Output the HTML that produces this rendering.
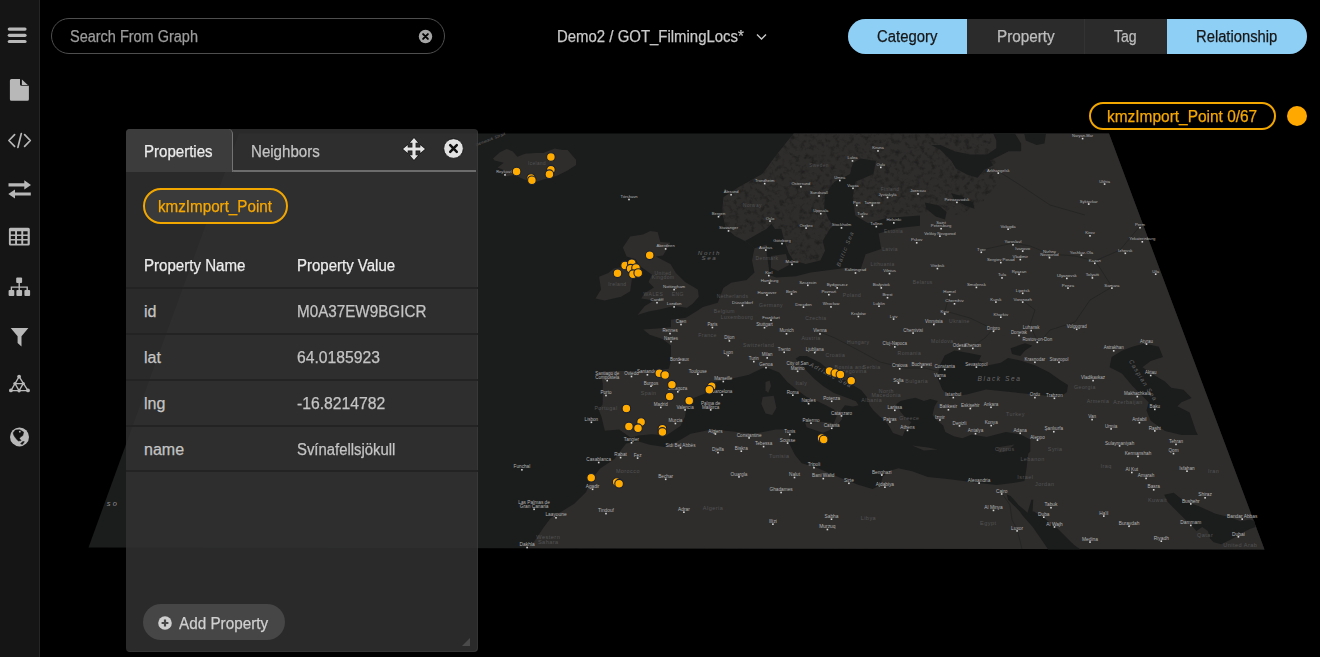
<!DOCTYPE html>
<html><head><meta charset="utf-8">
<style>
*{box-sizing:border-box;margin:0;padding:0}
html,body{width:1320px;height:657px;overflow:hidden;background:#000;font-family:"Liberation Sans",sans-serif}
.a{position:absolute;white-space:nowrap;line-height:16px;font-size:16px;-webkit-text-stroke:0.25px currentColor}
#side{position:absolute;left:0;top:0;width:40px;height:657px;background:#151515;border-right:1px solid #252525}
#map{position:absolute;left:0;top:0;width:1320px;height:657px}
#panel{position:absolute;left:126px;top:129.3px;width:351.6px;height:523px;background:rgba(50,50,50,0.84);border-radius:4px;overflow:hidden;box-shadow:inset -1px -1px 0 rgba(255,255,255,0.05)}
</style></head><body>
<svg id="map" width="1320" height="657" viewBox="0 0 1320 657">
<polygon points="239.0,133.6 1109.0,133.6 1264.5,549.5 88.5,547.5" fill="#1b1c1c"/>
<polygon points="793.6,133.6 1109.0,133.6 1264.5,549.5 527.0,548.2 534.2,541.5 543.6,527.4 550.7,518.0 562.5,510.9 574.3,503.8 586.1,492.0 590.8,480.2 600.2,468.4 614.4,459.0 621.4,449.5 626.2,443.6 630.9,437.7 619.1,429.5 604.9,430.7 603.7,426.0 601.4,416.5 598.5,409.3 602.6,404.7 602.8,396.5 602.8,383.7 600.7,373.1 611.3,371.0 632.6,371.0 653.9,371.0 668.8,368.8 671.0,360.3 671.0,345.4 662.4,339.0 649.7,334.7 643.3,329.4 660.3,328.3 671.0,327.3 671.0,319.8 685.9,317.7 696.5,311.3 702.9,307.0 717.8,302.8 723.3,287.9 731.1,282.7 746.6,280.1 754.5,272.6 752.0,260.4 754.5,248.2 745.0,241.0 735.0,236.0 725.9,228.3 722.0,212.8 723.3,197.3 738.8,186.9 762.1,174.0 777.6,153.3" fill="#2e2d2c"/>
<defs><filter id="tx" x="0" y="0" width="1" height="1"><feTurbulence type="fractalNoise" baseFrequency="0.2" numOctaves="3" seed="7" result="n"/><feColorMatrix in="n" type="matrix" values="0 0 0 0 0  0 0 0 0 0  0 0 0 0 0  2.6 0 0 0 -1.25" result="a"/><feComposite in="a" in2="SourceGraphic" operator="in"/></filter></defs>
<polygon points="793.6,133.6 777.6,153.3 762.1,174.0 738.8,186.9 723.3,197.3 722.0,212.8 725.9,228.3 735.0,236.0 766.7,228.7 783.7,238.5 793.5,260.4 820.3,260.4 833.0,226.0 825.0,194.6 850.0,174.0 876.0,161.0 873.0,174.0 855.0,182.0 852.7,197.3 855.3,215.4 886.0,218.0 925.0,212.0 960.0,215.0 985.0,200.0 1000.0,180.0 990.0,133.6" fill="#000" filter="url(#tx)" opacity="0.3"/>
<polygon points="745.0,241.0 749.6,238.5 766.7,228.7 771.5,223.8 775.0,229.0 781.3,228.7 783.7,238.5 788.6,253.0 793.5,260.4 805.7,264.0 820.3,260.4 825.1,250.6 822.7,240.9 830.0,228.7 833.0,226.0 828.0,218.0 824.2,208.0 825.0,194.6 834.6,181.8 850.1,174.0 852.7,163.6 860.5,158.5 876.0,161.1 873.4,174.0 855.3,181.8 852.7,197.3 855.3,215.4 868.2,223.2 886.3,218.0 920.0,215.4 920.0,225.8 896.7,228.3 878.6,233.5 881.2,249.0 865.6,254.2 860.5,269.7 847.0,267.7 830.0,270.1 810.5,272.6 795.9,276.2 776.4,277.4 769.1,275.0 769.1,270.1 766.7,253.1 766.7,244.6 754.5,248.2" fill="#1b1c1c"/>
<polygon points="630.9,437.7 638.0,435.4 652.1,434.2 666.3,435.4 680.4,426.0 685.1,416.5 685.9,409.3 692.3,398.6 705.6,393.2 712.0,382.6 722.6,380.5 733.2,378.3 748.2,375.1 765.5,366.9 779.2,372.4 787.4,382.0 795.6,388.8 806.6,397.1 817.5,401.2 825.8,405.3 834.0,409.4 836.7,416.2 834.0,423.1 831.2,427.2 836.7,425.8 842.2,419.0 840.8,410.8 844.9,405.3 853.2,406.6 858.6,405.3 855.9,401.2 844.9,397.1 834.0,393.0 823.0,386.1 814.8,379.2 806.6,371.0 801.1,364.2 795.6,358.7 799.7,356.0 806.6,356.0 814.8,360.1 820.3,362.8 828.5,369.7 839.5,376.5 850.4,383.4 861.4,390.2 866.8,397.1 869.6,405.3 873.7,410.8 880.3,417.0 885.6,421.2 889.9,427.6 893.0,433.0 902.6,436.2 904.8,430.8 908.0,427.6 911.2,422.3 904.8,417.0 900.5,411.7 896.2,404.2 900.5,401.0 909.0,398.9 915.4,397.8 924.0,401.0 930.4,398.9 937.8,401.0 934.6,406.3 932.5,414.9 936.8,420.2 943.2,425.5 945.3,431.9 953.8,436.2 962.3,438.3 971.8,434.5 986.4,436.9 1005.9,432.1 1020.5,434.5 1030.3,439.4 1030.3,451.5 1028.3,453.5 1026.4,469.2 1024.4,481.1 1012.6,483.0 996.8,485.0 979.1,483.0 963.3,481.1 947.6,479.1 927.9,477.1 912.1,471.2 898.3,468.3 888.5,471.2 882.6,477.1 880.6,485.0 872.7,488.9 858.9,485.0 843.2,479.1 829.4,473.2 815.6,467.3 801.8,463.3 795.0,455.0 788.6,442.2 790.8,433.7 784.4,429.5 775.8,429.5 754.5,433.7 733.2,431.6 712.0,429.5 690.6,433.7 680.0,440.1 666.3,447.2 649.7,444.8 638.0,441.3 626.2,443.6" fill="#1b1c1c"/>
<polygon points="954.5,350.6 944.7,355.5 939.9,365.3 937.4,377.4 942.3,389.6 949.6,396.9 966.7,394.5 986.2,389.6 1010.5,392.1 1034.9,394.5 1060.0,396.9 1067.0,392.0 1068.0,385.0 1060.0,379.9 1049.5,372.6 1034.9,365.3 1020.3,360.4 1008.1,358.0 1000.8,362.8 988.6,365.3 978.9,360.4 981.3,355.5 969.1,353.1" fill="#1b1c1c"/>
<polygon points="1010.5,348.2 1025.1,343.3 1032.4,345.8 1025.1,350.6 1020.3,356.0 1012.0,354.0" fill="#1b1c1c"/>
<polygon points="1132.2,346.7 1144.5,343.6 1158.9,346.7 1163.0,357.0 1150.7,361.1 1142.4,367.2 1154.8,375.5 1165.0,381.6 1171.2,387.8 1183.5,389.8 1191.7,398.1 1181.5,402.2 1177.4,406.3 1189.7,412.4 1195.9,430.9 1197.9,435.0 1181.5,435.0 1165.0,430.9 1150.7,420.7 1146.5,410.4 1148.6,402.2 1140.4,394.0 1132.2,385.7 1121.9,373.4 1109.6,367.2 1111.6,357.0 1121.9,350.8" fill="#1b1c1c"/>
<polygon points="1164.2,494.7 1173.7,492.8 1183.2,500.4 1198.4,506.1 1215.6,513.7 1230.8,517.5 1240.3,521.3 1249.8,519.4 1254.6,521.3 1255.5,527.0 1249.8,529.0 1242.2,532.8 1236.5,536.6 1228.9,540.4 1221.3,544.2 1213.7,542.3 1209.9,538.5 1207.9,530.9 1202.2,527.0 1196.5,530.9 1190.8,525.1 1179.4,513.7 1168.0,502.3" fill="#1b1c1c"/>
<polygon points="1006.8,494.6 1010.7,495.9 1018.5,504.9 1027.5,512.7 1031.4,499.8 1033.3,499.8 1032.5,511.4 1034.0,511.4 1045.6,519.2 1057.3,528.2 1065.0,536.0 1074.1,545.0 1080.6,549.6 1048.2,549.6 1041.7,539.9 1032.7,526.9 1022.3,515.3 1019.8,511.4 1008.1,499.8" fill="#1b1c1c"/>
<polygon points="993.2,133.6 1014.9,133.6 1021.1,143.5 1021.1,151.3 1008.7,151.3 996.3,157.5 990.0,160.6 993.2,165.3 983.9,169.9 977.6,177.7 966.8,174.6 955.9,168.4 951.2,160.6 940.4,149.7 931.1,145.1 940.4,145.1 954.3,151.3 969.9,154.4 987.0,154.4 996.3,148.2 996.3,140.4" fill="#1b1c1c"/>
<polygon points="1024.2,133.6 1046.0,133.6 1044.4,143.5 1036.6,145.1 1025.8,140.4" fill="#1b1c1c"/>
<polygon points="924.8,202.5 938.8,205.6 946.6,211.9 945.0,219.6 935.7,216.5 926.4,208.7" fill="#1b1c1c"/>
<polygon points="951.2,193.2 962.1,196.3 973.0,202.5 974.5,208.7 965.2,205.6 954.3,199.4" fill="#1b1c1c"/>
<polygon points="771.0,256.0 786.0,254.0 789.0,265.0 778.0,271.0 771.0,268.0" fill="#2e2d2c"/>
<polygon points="493.0,158.6 499.9,152.2 506.7,149.1 512.8,151.4 517.4,156.7 525.0,153.7 535.7,152.9 543.3,152.9 554.7,148.4 562.3,149.9 567.6,149.9 576.0,159.8 576.0,165.1 567.6,170.4 557.0,175.8 543.3,179.6 534.1,182.6 524.2,179.6 514.4,175.0 504.5,176.5 508.3,172.0 497.6,167.4 503.7,162.8 494.6,160.5" fill="#2e2d2c"/>
<polygon points="657.6,231.9 660.4,241.9 670.4,242.8 663.1,255.6 655.8,256.6 663.1,260.2 670.4,263.9 675.9,273.0 685.0,282.1 697.8,289.5 698.8,296.8 692.4,304.1 686.9,307.7 674.1,305.9 659.5,309.6 648.5,311.4 637.5,315.0 644.8,305.9 654.0,300.4 641.2,298.6 644.8,293.1 654.0,287.6 648.5,282.1 652.1,274.8 644.8,269.4 639.4,265.7 635.7,259.3 626.6,256.6 622.9,247.4 630.2,236.5 643.0,234.6 650.3,231.0" fill="#2e2d2c"/>
<polygon points="613.8,268.4 630.2,265.7 632.0,278.5 630.2,291.3 621.1,296.8 604.6,300.4 595.5,298.6 601.0,289.5 599.1,276.7 608.3,273.0" fill="#2e2d2c"/>
<polygon points="765.5,382.0 769.6,380.6 771.0,386.1 768.2,393.0 765.5,390.2" fill="#2e2d2c"/>
<polygon points="762.7,397.1 773.7,395.7 776.4,408.0 772.3,414.9 765.5,413.5 761.4,403.9" fill="#2e2d2c"/>
<polygon points="805.2,423.1 821.6,421.7 832.6,423.1 829.9,429.9 823.0,432.7 806.6,427.2" fill="#2e2d2c"/>
<polygon points="912.1,445.6 927.9,447.6 937.7,449.5 923.9,450.5" fill="#2e2d2c"/>
<polygon points="996.8,447.6 1014.5,444.6 1006.7,451.5 998.8,452.5" fill="#2e2d2c"/>
<polygon points="705.0,405.0 713.0,403.0 712.0,409.0 706.0,409.0" fill="#2e2d2c"/>
<g fill="none" stroke="#222322" stroke-width="0.75" stroke-linejoin="round"><polyline points="1040.0,342.0 1050.0,330.0 1075.0,322.0 1090.0,300.0 1112.0,287.0 1100.0,268.0 1095.0,261.0 1075.0,256.0 1050.0,254.0 1030.0,246.0 1013.0,243.0 995.0,247.0 981.0,250.0"/><polyline points="1037.0,340.0 1030.0,325.0 1035.0,310.0 1022.0,300.0"/><polyline points="973.0,346.0 985.0,338.0 993.0,329.0 970.0,318.0 945.0,311.0 950.0,292.0"/><polyline points="940.0,372.0 925.0,368.0 905.0,368.0 880.0,362.0 858.0,350.0 835.0,338.0 820.0,332.0"/><polyline points="1001.0,492.0 1010.0,505.0 1012.0,520.0 1017.0,529.0 1022.0,549.0"/><polyline points="1095.0,261.0 1120.0,250.0 1140.0,226.0"/><polyline points="998.0,171.0 1020.0,185.0 1050.0,205.0 1085.0,215.0"/></g>
<g font-family="Liberation Sans" text-anchor="middle"><text x="505.0" y="173.3" font-size="4.08" fill="#b4b4b4">Reykjavík</text><rect x="504.2" y="174.1" width="1.6" height="1.6" fill="#d8d8d8"/><text x="537.0" y="165.3" font-size="4.67" fill="#535353" letter-spacing="0.45">Iceland</text><text x="629.0" y="197.9" font-size="4.13" fill="#b4b4b4">Tórshavn</text><rect x="628.2" y="198.7" width="1.6" height="1.6" fill="#d8d8d8"/><text x="665.6" y="247.3" font-size="4.24" fill="#b4b4b4">Aberdeen</text><rect x="664.8" y="248.1" width="1.6" height="1.6" fill="#d8d8d8"/><text x="709.4" y="254.5" font-size="6.17" fill="#6a6a6a" font-style="italic" letter-spacing="1.6">North</text><text x="709.4" y="260.3" font-size="6.19" fill="#6a6a6a" font-style="italic" letter-spacing="1.6">Sea</text><text x="663.1" y="274.5" font-size="4.94" fill="#535353" letter-spacing="0.45">United</text><text x="663.1" y="278.9" font-size="4.96" fill="#535353" letter-spacing="0.45">Kingdom</text><text x="617.4" y="285.9" font-size="4.97" fill="#535353" letter-spacing="0.45">Ireland</text><text x="674.1" y="288.1" font-size="4.33" fill="#b4b4b4">Nottingham</text><rect x="673.3" y="288.8" width="1.6" height="1.6" fill="#d8d8d8"/><text x="653.4" y="295.8" font-size="5.00" fill="#535353" letter-spacing="0.45">WALES</text><text x="677.8" y="295.8" font-size="5.00" fill="#535353" letter-spacing="0.45">ENG</text><text x="657.0" y="301.2" font-size="4.36" fill="#b4b4b4">Cardiff</text><rect x="656.2" y="301.9" width="1.6" height="1.6" fill="#d8d8d8"/><text x="674.1" y="305.4" font-size="4.37" fill="#b4b4b4">London</text><rect x="673.3" y="306.1" width="1.6" height="1.6" fill="#d8d8d8"/><text x="681.0" y="323.0" font-size="4.41" fill="#b4b4b4">Caen</text><rect x="680.2" y="323.7" width="1.6" height="1.6" fill="#d8d8d8"/><text x="712.4" y="326.0" font-size="4.41" fill="#b4b4b4">Paris</text><rect x="711.6" y="326.7" width="1.6" height="1.6" fill="#d8d8d8"/><text x="670.0" y="332.1" font-size="4.43" fill="#b4b4b4">Rennes</text><rect x="669.2" y="332.8" width="1.6" height="1.6" fill="#d8d8d8"/><text x="707.5" y="336.6" font-size="5.10" fill="#535353" letter-spacing="0.45">France</text><text x="671.0" y="340.1" font-size="4.44" fill="#b4b4b4">Nantes</text><rect x="670.2" y="340.8" width="1.6" height="1.6" fill="#d8d8d8"/><text x="729.4" y="339.4" font-size="4.44" fill="#b4b4b4">Dijon</text><rect x="728.6" y="340.1" width="1.6" height="1.6" fill="#d8d8d8"/><text x="679.5" y="361.3" font-size="4.49" fill="#b4b4b4">Bordeaux</text><rect x="678.7" y="362.0" width="1.6" height="1.6" fill="#d8d8d8"/><text x="697.8" y="372.7" font-size="4.51" fill="#b4b4b4">Toulouse</text><rect x="697.0" y="373.4" width="1.6" height="1.6" fill="#d8d8d8"/><text x="728.2" y="354.0" font-size="4.47" fill="#b4b4b4">Lyon</text><rect x="727.4" y="354.7" width="1.6" height="1.6" fill="#d8d8d8"/><text x="723.3" y="380.0" font-size="4.53" fill="#b4b4b4">Marseille</text><rect x="722.5" y="380.7" width="1.6" height="1.6" fill="#d8d8d8"/><text x="718.5" y="215.1" font-size="4.17" fill="#b4b4b4">Bergen</text><rect x="717.7" y="215.9" width="1.6" height="1.6" fill="#d8d8d8"/><text x="728.5" y="229.3" font-size="4.20" fill="#b4b4b4">Stavanger</text><rect x="727.7" y="230.1" width="1.6" height="1.6" fill="#d8d8d8"/><text x="731.1" y="193.1" font-size="4.12" fill="#b4b4b4">Ålesund</text><rect x="730.3" y="193.9" width="1.6" height="1.6" fill="#d8d8d8"/><text x="764.7" y="182.0" font-size="4.10" fill="#b4b4b4">Trondheim</text><rect x="763.9" y="182.8" width="1.6" height="1.6" fill="#d8d8d8"/><text x="800.9" y="185.1" font-size="4.11" fill="#b4b4b4">Östersund</text><rect x="800.1" y="185.9" width="1.6" height="1.6" fill="#d8d8d8"/><text x="819.0" y="194.4" font-size="4.13" fill="#b4b4b4">Sundsvall</text><rect x="818.2" y="195.2" width="1.6" height="1.6" fill="#d8d8d8"/><text x="819.0" y="166.7" font-size="4.68" fill="#535353" letter-spacing="0.45">Sweden</text><text x="752.5" y="207.4" font-size="4.78" fill="#535353" letter-spacing="0.45">Norway</text><text x="770.0" y="219.5" font-size="4.18" fill="#b4b4b4">Oslo</text><rect x="769.2" y="220.3" width="1.6" height="1.6" fill="#d8d8d8"/><text x="820.8" y="212.1" font-size="4.17" fill="#b4b4b4">Uppsala</text><rect x="820.0" y="212.9" width="1.6" height="1.6" fill="#d8d8d8"/><text x="806.1" y="226.5" font-size="4.20" fill="#b4b4b4">Örebro</text><rect x="805.3" y="227.3" width="1.6" height="1.6" fill="#d8d8d8"/><text x="841.5" y="226.3" font-size="4.20" fill="#b4b4b4">Stockholm</text><rect x="840.7" y="227.1" width="1.6" height="1.6" fill="#d8d8d8"/><text x="782.0" y="242.0" font-size="4.23" fill="#b4b4b4">Göteborg</text><rect x="781.2" y="242.8" width="1.6" height="1.6" fill="#d8d8d8"/><text x="765.8" y="248.5" font-size="4.24" fill="#b4b4b4">Aarhus</text><rect x="765.0" y="249.3" width="1.6" height="1.6" fill="#d8d8d8"/><text x="767.0" y="260.4" font-size="4.91" fill="#535353" letter-spacing="0.45">Denmark</text><text x="792.0" y="262.8" font-size="4.28" fill="#b4b4b4">Malmö</text><rect x="791.2" y="263.6" width="1.6" height="1.6" fill="#d8d8d8"/><text x="768.8" y="274.0" font-size="4.30" fill="#b4b4b4">Kiel</text><rect x="768.0" y="274.8" width="1.6" height="1.6" fill="#d8d8d8"/><text x="769.5" y="281.6" font-size="4.32" fill="#b4b4b4">Hamburg</text><rect x="768.7" y="282.3" width="1.6" height="1.6" fill="#d8d8d8"/><text x="767.0" y="293.6" font-size="4.34" fill="#b4b4b4">Hannover</text><rect x="766.2" y="294.3" width="1.6" height="1.6" fill="#d8d8d8"/><text x="791.5" y="292.5" font-size="4.34" fill="#b4b4b4">Berlin</text><rect x="790.7" y="293.2" width="1.6" height="1.6" fill="#d8d8d8"/><text x="807.8" y="283.8" font-size="4.32" fill="#b4b4b4">Szczecin</text><rect x="807.0" y="284.5" width="1.6" height="1.6" fill="#d8d8d8"/><text x="837.2" y="286.4" font-size="4.33" fill="#b4b4b4">Bydgoszcz</text><rect x="836.4" y="287.1" width="1.6" height="1.6" fill="#d8d8d8"/><text x="855.5" y="271.4" font-size="4.29" fill="#b4b4b4">Kaliningrad</text><rect x="854.7" y="272.2" width="1.6" height="1.6" fill="#d8d8d8"/><text x="847.0" y="249.4" font-size="5.74" fill="#6a6a6a" font-style="italic" letter-spacing="1.2" transform="rotate(-68 847.0 249.4)">Baltic Sea</text><text x="732.6" y="298.4" font-size="5.00" fill="#535353" letter-spacing="0.45">Netherlands</text><text x="742.5" y="304.0" font-size="4.36" fill="#b4b4b4">Düsseldorf</text><rect x="741.7" y="304.7" width="1.6" height="1.6" fill="#d8d8d8"/><text x="771.0" y="306.5" font-size="5.02" fill="#535353" letter-spacing="0.45">Germany</text><text x="803.5" y="305.6" font-size="4.37" fill="#b4b4b4">Dresden</text><rect x="802.7" y="306.3" width="1.6" height="1.6" fill="#d8d8d8"/><text x="831.0" y="305.4" font-size="4.37" fill="#b4b4b4">Wrocław</text><rect x="830.2" y="306.1" width="1.6" height="1.6" fill="#d8d8d8"/><text x="828.8" y="293.2" font-size="4.34" fill="#b4b4b4">Poznań</text><rect x="828.0" y="293.9" width="1.6" height="1.6" fill="#d8d8d8"/><text x="852.0" y="296.8" font-size="5.00" fill="#535353" letter-spacing="0.45">Poland</text><text x="724.3" y="313.2" font-size="5.04" fill="#535353" letter-spacing="0.45">Belgium</text><text x="737.0" y="319.3" font-size="5.06" fill="#535353" letter-spacing="0.45">Luxembourg</text><text x="771.0" y="318.7" font-size="4.40" fill="#b4b4b4">Frankfurt</text><rect x="770.2" y="319.4" width="1.6" height="1.6" fill="#d8d8d8"/><text x="815.9" y="319.5" font-size="5.06" fill="#535353" letter-spacing="0.45">Czechia</text><text x="764.5" y="326.2" font-size="4.41" fill="#b4b4b4">Stuttgart</text><rect x="763.7" y="326.9" width="1.6" height="1.6" fill="#d8d8d8"/><text x="786.5" y="332.3" font-size="4.43" fill="#b4b4b4">Munich</text><rect x="785.7" y="333.0" width="1.6" height="1.6" fill="#d8d8d8"/><text x="820.0" y="332.4" font-size="4.43" fill="#b4b4b4">Vienna</text><rect x="819.2" y="333.1" width="1.6" height="1.6" fill="#d8d8d8"/><text x="858.4" y="315.0" font-size="4.39" fill="#b4b4b4">Kraków</text><rect x="857.6" y="315.7" width="1.6" height="1.6" fill="#d8d8d8"/><text x="852.5" y="159.3" font-size="4.05" fill="#b4b4b4">Luleå</text><rect x="851.7" y="160.1" width="1.6" height="1.6" fill="#d8d8d8"/><text x="880.8" y="165.8" font-size="4.07" fill="#b4b4b4">Oulu</text><rect x="880.0" y="166.6" width="1.6" height="1.6" fill="#d8d8d8"/><text x="878.0" y="149.3" font-size="4.03" fill="#b4b4b4">Kiruna</text><rect x="877.2" y="150.1" width="1.6" height="1.6" fill="#d8d8d8"/><text x="839.8" y="178.9" font-size="4.09" fill="#b4b4b4">Umeå</text><rect x="839.0" y="179.7" width="1.6" height="1.6" fill="#d8d8d8"/><text x="853.0" y="186.7" font-size="4.11" fill="#b4b4b4">Vaasa</text><rect x="852.2" y="187.5" width="1.6" height="1.6" fill="#d8d8d8"/><text x="890.0" y="191.4" font-size="4.74" fill="#535353" letter-spacing="0.45">Finland</text><text x="887.5" y="195.9" font-size="4.13" fill="#b4b4b4">Jyväskylä</text><rect x="886.7" y="196.7" width="1.6" height="1.6" fill="#d8d8d8"/><text x="856.8" y="203.8" font-size="4.15" fill="#b4b4b4">Pori</text><rect x="856.0" y="204.6" width="1.6" height="1.6" fill="#d8d8d8"/><text x="872.3" y="203.8" font-size="4.15" fill="#b4b4b4">Tampere</text><rect x="871.5" y="204.6" width="1.6" height="1.6" fill="#d8d8d8"/><text x="862.4" y="214.9" font-size="4.17" fill="#b4b4b4">Turku</text><rect x="861.6" y="215.7" width="1.6" height="1.6" fill="#d8d8d8"/><text x="893.8" y="221.3" font-size="4.19" fill="#b4b4b4">Helsinki</text><rect x="893.0" y="222.1" width="1.6" height="1.6" fill="#d8d8d8"/><text x="876.3" y="225.0" font-size="4.19" fill="#b4b4b4">Tallinn</text><rect x="875.5" y="225.8" width="1.6" height="1.6" fill="#d8d8d8"/><text x="893.6" y="233.3" font-size="4.84" fill="#535353" letter-spacing="0.45">Estonia</text><text x="918.0" y="192.3" font-size="4.12" fill="#b4b4b4">Joensuu</text><rect x="917.2" y="193.1" width="1.6" height="1.6" fill="#d8d8d8"/><text x="956.9" y="200.8" font-size="4.14" fill="#b4b4b4">Petrozavodsk</text><rect x="956.1" y="201.6" width="1.6" height="1.6" fill="#d8d8d8"/><text x="998.3" y="171.5" font-size="4.08" fill="#b4b4b4">Arkhangelsk</text><rect x="997.5" y="172.3" width="1.6" height="1.6" fill="#d8d8d8"/><text x="1082.6" y="136.9" font-size="4.00" fill="#b4b4b4">Naryan-Mar</text><rect x="1081.8" y="137.8" width="1.6" height="1.6" fill="#d8d8d8"/><text x="1104.6" y="182.5" font-size="4.10" fill="#b4b4b4">Ukhta</text><rect x="1103.8" y="183.3" width="1.6" height="1.6" fill="#d8d8d8"/><text x="1088.7" y="202.5" font-size="4.14" fill="#b4b4b4">Syktyvkar</text><rect x="1087.9" y="203.3" width="1.6" height="1.6" fill="#d8d8d8"/><text x="941.1" y="223.7" font-size="4.19" fill="#b4b4b4">Saint</text><text x="941.1" y="227.1" font-size="4.20" fill="#b4b4b4">Petersburg</text><rect x="940.3" y="227.9" width="1.6" height="1.6" fill="#d8d8d8"/><text x="939.9" y="234.6" font-size="4.21" fill="#b4b4b4">Velikiy Novgorod</text><rect x="939.1" y="235.4" width="1.6" height="1.6" fill="#d8d8d8"/><text x="916.7" y="241.2" font-size="4.23" fill="#b4b4b4">Pskov</text><rect x="915.9" y="242.0" width="1.6" height="1.6" fill="#d8d8d8"/><text x="890.0" y="250.9" font-size="4.89" fill="#535353" letter-spacing="0.45">Latvia</text><text x="882.6" y="266.2" font-size="4.92" fill="#535353" letter-spacing="0.45">Lithuania</text><text x="889.5" y="272.0" font-size="4.30" fill="#b4b4b4">Vilnius</text><rect x="888.7" y="272.8" width="1.6" height="1.6" fill="#d8d8d8"/><text x="922.8" y="283.9" font-size="4.97" fill="#535353" letter-spacing="0.45">Belarus</text><text x="937.4" y="267.0" font-size="4.28" fill="#b4b4b4">Vitebsk</text><rect x="936.6" y="267.8" width="1.6" height="1.6" fill="#d8d8d8"/><text x="881.3" y="286.4" font-size="4.33" fill="#b4b4b4">Białystok</text><rect x="880.5" y="287.1" width="1.6" height="1.6" fill="#d8d8d8"/><text x="976.4" y="285.9" font-size="4.33" fill="#b4b4b4">Smolensk</text><rect x="975.6" y="286.6" width="1.6" height="1.6" fill="#d8d8d8"/><text x="981.3" y="250.7" font-size="4.25" fill="#b4b4b4">Tver</text><rect x="980.5" y="251.5" width="1.6" height="1.6" fill="#d8d8d8"/><text x="1008.1" y="227.6" font-size="4.20" fill="#b4b4b4">Vologda</text><rect x="1007.3" y="228.4" width="1.6" height="1.6" fill="#d8d8d8"/><text x="1013.0" y="243.2" font-size="4.23" fill="#b4b4b4">Yaroslavl</text><rect x="1012.2" y="244.0" width="1.6" height="1.6" fill="#d8d8d8"/><text x="1022.7" y="249.5" font-size="4.25" fill="#b4b4b4">Ivanovo</text><rect x="1021.9" y="250.3" width="1.6" height="1.6" fill="#d8d8d8"/><text x="1020.3" y="258.0" font-size="4.27" fill="#b4b4b4">Vladimir</text><rect x="1019.5" y="258.8" width="1.6" height="1.6" fill="#d8d8d8"/><text x="1000.8" y="261.0" font-size="4.27" fill="#b4b4b4">Sergiev Posad</text><rect x="1000.0" y="261.8" width="1.6" height="1.6" fill="#d8d8d8"/><text x="1049.5" y="252.9" font-size="4.25" fill="#b4b4b4">Nizhny</text><text x="1049.5" y="256.1" font-size="4.26" fill="#b4b4b4">Novgorod</text><rect x="1048.7" y="256.9" width="1.6" height="1.6" fill="#d8d8d8"/><text x="1090.0" y="234.2" font-size="4.21" fill="#b4b4b4">Kirov</text><rect x="1089.2" y="235.0" width="1.6" height="1.6" fill="#d8d8d8"/><text x="1140.0" y="226.1" font-size="4.20" fill="#b4b4b4">Perm</text><rect x="1139.2" y="226.9" width="1.6" height="1.6" fill="#d8d8d8"/><text x="1142.3" y="240.2" font-size="4.23" fill="#b4b4b4">Yekaterinburg</text><rect x="1141.5" y="241.0" width="1.6" height="1.6" fill="#d8d8d8"/><text x="1125.3" y="251.7" font-size="4.25" fill="#b4b4b4">Izhevsk</text><rect x="1124.5" y="252.5" width="1.6" height="1.6" fill="#d8d8d8"/><text x="1081.4" y="253.6" font-size="4.26" fill="#b4b4b4">Yoshkar-Ola</text><rect x="1080.6" y="254.4" width="1.6" height="1.6" fill="#d8d8d8"/><text x="1094.8" y="261.7" font-size="4.27" fill="#b4b4b4">Kazan</text><rect x="1094.0" y="262.5" width="1.6" height="1.6" fill="#d8d8d8"/><text x="1155.7" y="272.6" font-size="4.30" fill="#b4b4b4">Ufa</text><rect x="1154.9" y="273.4" width="1.6" height="1.6" fill="#d8d8d8"/><text x="1066.8" y="276.9" font-size="4.31" fill="#b4b4b4">Ulyanovsk</text><rect x="1066.0" y="277.6" width="1.6" height="1.6" fill="#d8d8d8"/><text x="1092.4" y="276.3" font-size="4.30" fill="#b4b4b4">Tolyatti</text><rect x="1091.6" y="277.1" width="1.6" height="1.6" fill="#d8d8d8"/><text x="1111.9" y="286.6" font-size="4.33" fill="#b4b4b4">Samara</text><rect x="1111.1" y="287.3" width="1.6" height="1.6" fill="#d8d8d8"/><text x="1068.0" y="286.6" font-size="4.33" fill="#b4b4b4">Penza</text><rect x="1067.2" y="287.3" width="1.6" height="1.6" fill="#d8d8d8"/><text x="1002.0" y="276.3" font-size="4.30" fill="#b4b4b4">Tula</text><rect x="1001.2" y="277.1" width="1.6" height="1.6" fill="#d8d8d8"/><text x="1019.0" y="272.7" font-size="4.30" fill="#b4b4b4">Ryazan</text><rect x="1018.2" y="273.5" width="1.6" height="1.6" fill="#d8d8d8"/><text x="1022.7" y="291.8" font-size="4.34" fill="#b4b4b4">Lipetsk</text><rect x="1021.9" y="292.5" width="1.6" height="1.6" fill="#d8d8d8"/><text x="887.5" y="296.2" font-size="4.35" fill="#b4b4b4">Brest</text><rect x="886.7" y="296.9" width="1.6" height="1.6" fill="#d8d8d8"/><text x="879.0" y="304.7" font-size="4.37" fill="#b4b4b4">Lublin</text><rect x="878.2" y="305.4" width="1.6" height="1.6" fill="#d8d8d8"/><text x="949.6" y="293.3" font-size="4.34" fill="#b4b4b4">Homel</text><rect x="948.8" y="294.0" width="1.6" height="1.6" fill="#d8d8d8"/><text x="954.5" y="302.3" font-size="4.36" fill="#b4b4b4">Chernihiv</text><rect x="953.7" y="303.0" width="1.6" height="1.6" fill="#d8d8d8"/><text x="995.9" y="300.6" font-size="4.36" fill="#b4b4b4">Kursk</text><rect x="995.1" y="301.3" width="1.6" height="1.6" fill="#d8d8d8"/><text x="1022.7" y="300.6" font-size="4.36" fill="#b4b4b4">Voronezh</text><rect x="1021.9" y="301.3" width="1.6" height="1.6" fill="#d8d8d8"/><text x="944.7" y="312.5" font-size="4.38" fill="#b4b4b4">Kyiv</text><rect x="943.9" y="313.2" width="1.6" height="1.6" fill="#d8d8d8"/><text x="1000.8" y="315.7" font-size="4.39" fill="#b4b4b4">Kharkiv</text><rect x="1000.0" y="316.4" width="1.6" height="1.6" fill="#d8d8d8"/><text x="893.6" y="317.6" font-size="4.39" fill="#b4b4b4">Lviv</text><rect x="892.8" y="318.3" width="1.6" height="1.6" fill="#d8d8d8"/><text x="933.8" y="323.0" font-size="4.41" fill="#b4b4b4">Vinnytsia</text><rect x="933.0" y="323.7" width="1.6" height="1.6" fill="#d8d8d8"/><text x="959.4" y="323.4" font-size="5.07" fill="#535353" letter-spacing="0.45">Ukraine</text><text x="913.1" y="331.6" font-size="4.42" fill="#b4b4b4">Chernivtsi</text><rect x="912.3" y="332.3" width="1.6" height="1.6" fill="#d8d8d8"/><text x="993.5" y="329.8" font-size="4.42" fill="#b4b4b4">Dnipro</text><rect x="992.7" y="330.5" width="1.6" height="1.6" fill="#d8d8d8"/><text x="1031.2" y="329.1" font-size="4.42" fill="#b4b4b4">Luhansk</text><rect x="1030.4" y="329.8" width="1.6" height="1.6" fill="#d8d8d8"/><text x="1019.0" y="334.0" font-size="4.43" fill="#b4b4b4">Donetsk</text><rect x="1018.2" y="334.7" width="1.6" height="1.6" fill="#d8d8d8"/><text x="1076.7" y="327.8" font-size="4.42" fill="#b4b4b4">Volgograd</text><rect x="1075.9" y="328.5" width="1.6" height="1.6" fill="#d8d8d8"/><text x="1037.3" y="340.8" font-size="4.44" fill="#b4b4b4">Rostov-on-Don</text><rect x="1036.5" y="341.5" width="1.6" height="1.6" fill="#d8d8d8"/><text x="1146.5" y="342.6" font-size="4.45" fill="#b4b4b4">Atyrau</text><rect x="1145.7" y="343.3" width="1.6" height="1.6" fill="#d8d8d8"/><text x="1113.7" y="349.3" font-size="4.46" fill="#b4b4b4">Astrakhan</text><rect x="1112.9" y="350.0" width="1.6" height="1.6" fill="#d8d8d8"/><text x="858.3" y="344.0" font-size="5.12" fill="#535353" letter-spacing="0.45">Hungary</text><text x="894.8" y="345.4" font-size="4.45" fill="#b4b4b4">Cluj-Napoca</text><rect x="894.0" y="346.1" width="1.6" height="1.6" fill="#d8d8d8"/><text x="942.3" y="343.4" font-size="5.12" fill="#535353" letter-spacing="0.45">Moldova</text><text x="959.4" y="347.4" font-size="4.46" fill="#b4b4b4">Odesa</text><rect x="958.6" y="348.1" width="1.6" height="1.6" fill="#d8d8d8"/><text x="972.8" y="346.9" font-size="4.46" fill="#b4b4b4">Kherson</text><rect x="972.0" y="347.6" width="1.6" height="1.6" fill="#d8d8d8"/><text x="909.4" y="355.1" font-size="5.15" fill="#535353" letter-spacing="0.45">Romania</text><text x="976.4" y="365.6" font-size="4.50" fill="#b4b4b4">Sevastopol</text><rect x="975.6" y="366.3" width="1.6" height="1.6" fill="#d8d8d8"/><text x="1034.9" y="360.8" font-size="4.49" fill="#b4b4b4">Krasnodar</text><rect x="1034.1" y="361.5" width="1.6" height="1.6" fill="#d8d8d8"/><text x="1059.0" y="360.8" font-size="4.49" fill="#b4b4b4">Stavropol</text><rect x="1058.2" y="361.5" width="1.6" height="1.6" fill="#d8d8d8"/><text x="1150.7" y="374.0" font-size="4.52" fill="#b4b4b4">Aktau</text><rect x="1149.9" y="374.7" width="1.6" height="1.6" fill="#d8d8d8"/><text x="1093.1" y="379.1" font-size="4.53" fill="#b4b4b4">Vladikavkaz</text><rect x="1092.3" y="379.8" width="1.6" height="1.6" fill="#d8d8d8"/><text x="1084.9" y="388.8" font-size="5.23" fill="#535353" letter-spacing="0.45">Georgia</text><text x="1141.4" y="381.6" font-size="6.12" fill="#6a6a6a" font-style="italic" letter-spacing="1.2" transform="rotate(58 1141.4 381.6)">Caspian Sea</text><text x="999.6" y="380.5" font-size="6.57" fill="#6a6a6a" font-style="italic" letter-spacing="1.6">Black Sea</text><text x="811.0" y="339.8" font-size="5.11" fill="#535353" letter-spacing="0.45">Austria</text><text x="758.7" y="346.6" font-size="5.12" fill="#535353" letter-spacing="0.45">Switzerland</text><text x="784.2" y="350.8" font-size="4.47" fill="#b4b4b4">Trento</text><rect x="783.4" y="351.5" width="1.6" height="1.6" fill="#d8d8d8"/><text x="814.7" y="351.1" font-size="4.47" fill="#b4b4b4">Ljubljana</text><rect x="813.9" y="351.8" width="1.6" height="1.6" fill="#d8d8d8"/><text x="835.4" y="356.8" font-size="5.15" fill="#535353" letter-spacing="0.45">Croatia</text><text x="767.2" y="356.4" font-size="4.48" fill="#b4b4b4">Milan</text><rect x="766.4" y="357.1" width="1.6" height="1.6" fill="#d8d8d8"/><text x="753.8" y="360.1" font-size="4.49" fill="#b4b4b4">Turin</text><rect x="753.0" y="360.8" width="1.6" height="1.6" fill="#d8d8d8"/><text x="766.0" y="366.2" font-size="4.50" fill="#b4b4b4">Genoa</text><rect x="765.2" y="366.9" width="1.6" height="1.6" fill="#d8d8d8"/><text x="797.6" y="365.4" font-size="4.50" fill="#b4b4b4">City of San</text><text x="797.6" y="369.8" font-size="4.51" fill="#b4b4b4">Marino</text><rect x="796.8" y="370.5" width="1.6" height="1.6" fill="#d8d8d8"/><text x="849.7" y="368.5" font-size="5.18" fill="#535353" letter-spacing="0.45">Bosnia and</text><text x="849.7" y="372.5" font-size="5.19" fill="#535353" letter-spacing="0.45">Herzegovina</text><text x="871.7" y="369.2" font-size="5.18" fill="#535353" letter-spacing="0.45">Serbia</text><text x="921.6" y="365.6" font-size="4.50" fill="#b4b4b4">Bucharest</text><rect x="920.8" y="366.3" width="1.6" height="1.6" fill="#d8d8d8"/><text x="944.7" y="368.1" font-size="4.50" fill="#b4b4b4">Constanta</text><rect x="943.9" y="368.8" width="1.6" height="1.6" fill="#d8d8d8"/><text x="899.7" y="367.3" font-size="4.50" fill="#b4b4b4">Craiova</text><rect x="898.9" y="368.0" width="1.6" height="1.6" fill="#d8d8d8"/><text x="939.9" y="377.1" font-size="4.52" fill="#b4b4b4">Varna</text><rect x="939.1" y="377.8" width="1.6" height="1.6" fill="#d8d8d8"/><text x="898.5" y="381.5" font-size="4.53" fill="#b4b4b4">Sofia</text><rect x="897.7" y="382.2" width="1.6" height="1.6" fill="#d8d8d8"/><text x="916.7" y="382.6" font-size="5.21" fill="#535353" letter-spacing="0.45">Bulgaria</text><text x="886.3" y="392.9" font-size="5.24" fill="#535353" letter-spacing="0.45">North</text><text x="886.3" y="396.6" font-size="5.25" fill="#535353" letter-spacing="0.45">Macedonia</text><text x="871.7" y="402.0" font-size="5.26" fill="#535353" letter-spacing="0.45">Albania</text><text x="801.3" y="384.8" font-size="5.22" fill="#535353" letter-spacing="0.45">Italy</text><text x="830.0" y="377.0" font-size="6.11" fill="#6a6a6a" font-style="italic" letter-spacing="1.2" transform="rotate(28 830.0 377.0)">Adriatic Sea</text><text x="792.8" y="393.7" font-size="4.56" fill="#b4b4b4">Roma</text><rect x="792.0" y="394.4" width="1.6" height="1.6" fill="#d8d8d8"/><text x="808.6" y="402.2" font-size="4.58" fill="#b4b4b4">Naples</text><rect x="807.8" y="402.9" width="1.6" height="1.6" fill="#d8d8d8"/><text x="831.7" y="399.8" font-size="4.57" fill="#b4b4b4">Potenza</text><rect x="830.9" y="400.5" width="1.6" height="1.6" fill="#d8d8d8"/><text x="841.5" y="414.5" font-size="4.60" fill="#b4b4b4">Catanzaro</text><rect x="840.7" y="415.1" width="1.6" height="1.6" fill="#d8d8d8"/><text x="811.0" y="421.8" font-size="4.62" fill="#b4b4b4">Palermo</text><rect x="810.2" y="422.4" width="1.6" height="1.6" fill="#d8d8d8"/><text x="831.7" y="426.9" font-size="4.63" fill="#b4b4b4">Catania</text><rect x="830.9" y="427.5" width="1.6" height="1.6" fill="#d8d8d8"/><text x="894.8" y="408.9" font-size="4.59" fill="#b4b4b4">Larissa</text><rect x="894.0" y="409.5" width="1.6" height="1.6" fill="#d8d8d8"/><text x="889.9" y="420.6" font-size="4.62" fill="#b4b4b4">Patras</text><rect x="889.1" y="421.2" width="1.6" height="1.6" fill="#d8d8d8"/><text x="909.4" y="419.7" font-size="5.31" fill="#535353" letter-spacing="0.45">Greece</text><text x="907.5" y="429.0" font-size="4.63" fill="#b4b4b4">Athens</text><rect x="906.7" y="429.6" width="1.6" height="1.6" fill="#d8d8d8"/><text x="953.3" y="396.1" font-size="4.56" fill="#b4b4b4">Istanbul</text><rect x="952.5" y="396.8" width="1.6" height="1.6" fill="#d8d8d8"/><text x="948.4" y="408.4" font-size="4.59" fill="#b4b4b4">Balıkesir</text><rect x="947.6" y="409.0" width="1.6" height="1.6" fill="#d8d8d8"/><text x="970.3" y="407.2" font-size="4.59" fill="#b4b4b4">Eskişehir</text><rect x="969.5" y="407.8" width="1.6" height="1.6" fill="#d8d8d8"/><text x="991.0" y="405.9" font-size="4.58" fill="#b4b4b4">Ankara</text><rect x="990.2" y="406.5" width="1.6" height="1.6" fill="#d8d8d8"/><text x="1015.4" y="415.6" font-size="5.30" fill="#535353" letter-spacing="0.45">Turkey</text><text x="1034.9" y="396.1" font-size="4.56" fill="#b4b4b4">Ordu</text><rect x="1034.1" y="396.8" width="1.6" height="1.6" fill="#d8d8d8"/><text x="1054.4" y="396.8" font-size="4.57" fill="#b4b4b4">Trabzon</text><rect x="1053.6" y="397.5" width="1.6" height="1.6" fill="#d8d8d8"/><text x="1137.3" y="395.1" font-size="4.56" fill="#b4b4b4">Makhachkala</text><rect x="1136.5" y="395.8" width="1.6" height="1.6" fill="#d8d8d8"/><text x="1098.0" y="402.6" font-size="5.26" fill="#535353" letter-spacing="0.45">Armenia</text><text x="1128.0" y="404.1" font-size="5.27" fill="#535353" letter-spacing="0.45">Azerbaijan</text><text x="1154.8" y="408.0" font-size="4.59" fill="#b4b4b4">Baku</text><rect x="1154.0" y="408.6" width="1.6" height="1.6" fill="#d8d8d8"/><text x="1092.1" y="418.2" font-size="4.61" fill="#b4b4b4">Van</text><rect x="1091.3" y="418.8" width="1.6" height="1.6" fill="#d8d8d8"/><text x="1139.4" y="421.3" font-size="4.62" fill="#b4b4b4">Ardabil</text><rect x="1138.6" y="421.9" width="1.6" height="1.6" fill="#d8d8d8"/><text x="1111.1" y="427.5" font-size="4.63" fill="#b4b4b4">Urmia</text><rect x="1110.3" y="428.1" width="1.6" height="1.6" fill="#d8d8d8"/><text x="1154.8" y="429.5" font-size="4.64" fill="#b4b4b4">Rasht</text><rect x="1154.0" y="430.1" width="1.6" height="1.6" fill="#d8d8d8"/><text x="939.9" y="418.6" font-size="4.61" fill="#b4b4b4">Izmir</text><rect x="939.1" y="419.2" width="1.6" height="1.6" fill="#d8d8d8"/><text x="959.5" y="424.5" font-size="4.62" fill="#b4b4b4">Denizli</text><rect x="958.7" y="425.1" width="1.6" height="1.6" fill="#d8d8d8"/><text x="991.2" y="424.2" font-size="4.62" fill="#b4b4b4">Konya</text><rect x="990.4" y="424.8" width="1.6" height="1.6" fill="#d8d8d8"/><text x="975.5" y="432.3" font-size="4.64" fill="#b4b4b4">Antalya</text><rect x="974.7" y="432.9" width="1.6" height="1.6" fill="#d8d8d8"/><text x="1020.2" y="431.9" font-size="4.64" fill="#b4b4b4">Adana</text><rect x="1019.4" y="432.5" width="1.6" height="1.6" fill="#d8d8d8"/><text x="1053.8" y="430.3" font-size="4.64" fill="#b4b4b4">Şanlıurfa</text><rect x="1053.0" y="430.9" width="1.6" height="1.6" fill="#d8d8d8"/><text x="1037.5" y="438.7" font-size="4.66" fill="#b4b4b4">Aleppo</text><rect x="1036.7" y="439.3" width="1.6" height="1.6" fill="#d8d8d8"/><text x="1176.0" y="443.0" font-size="4.66" fill="#b4b4b4">Tehran</text><rect x="1175.2" y="443.6" width="1.6" height="1.6" fill="#d8d8d8"/><text x="1173.5" y="452.2" font-size="4.68" fill="#b4b4b4">Qom</text><rect x="1172.7" y="452.8" width="1.6" height="1.6" fill="#d8d8d8"/><text x="1119.6" y="444.5" font-size="4.67" fill="#b4b4b4">Sulaymaniyah</text><rect x="1118.8" y="445.1" width="1.6" height="1.6" fill="#d8d8d8"/><text x="1138.0" y="455.0" font-size="4.69" fill="#b4b4b4">Kermanshah</text><rect x="1137.2" y="455.6" width="1.6" height="1.6" fill="#d8d8d8"/><text x="1004.8" y="451.3" font-size="5.38" fill="#535353" letter-spacing="0.45">Cyprus</text><text x="1055.1" y="451.3" font-size="5.38" fill="#535353" letter-spacing="0.45">Syria</text><text x="1032.5" y="460.5" font-size="5.41" fill="#535353" letter-spacing="0.45">Lebanon</text><text x="1106.2" y="468.3" font-size="5.43" fill="#535353" letter-spacing="0.45">Iraq</text><text x="1025.3" y="478.6" font-size="5.45" fill="#535353" letter-spacing="0.45">Israel</text><text x="1044.8" y="486.2" font-size="5.47" fill="#535353" letter-spacing="0.45">Jordan</text><text x="1131.8" y="471.1" font-size="4.73" fill="#b4b4b4">Al Kut</text><rect x="1131.0" y="471.7" width="1.6" height="1.6" fill="#d8d8d8"/><text x="1187.0" y="469.8" font-size="4.72" fill="#b4b4b4">Isfahan</text><rect x="1186.2" y="470.4" width="1.6" height="1.6" fill="#d8d8d8"/><text x="1213.7" y="472.6" font-size="5.44" fill="#535353" letter-spacing="0.45">Iran</text><text x="1146.1" y="477.0" font-size="4.74" fill="#b4b4b4">Amarah</text><rect x="1145.3" y="477.6" width="1.6" height="1.6" fill="#d8d8d8"/><text x="1153.7" y="488.4" font-size="4.76" fill="#b4b4b4">Basra</text><rect x="1152.9" y="489.0" width="1.6" height="1.6" fill="#d8d8d8"/><text x="1157.5" y="501.7" font-size="5.51" fill="#535353" letter-spacing="0.45">Kuwait</text><text x="1205.1" y="496.4" font-size="4.78" fill="#b4b4b4">Shiraz</text><rect x="1204.3" y="497.0" width="1.6" height="1.6" fill="#d8d8d8"/><text x="1190.8" y="502.5" font-size="4.79" fill="#b4b4b4">Bushehr</text><rect x="1190.0" y="503.1" width="1.6" height="1.6" fill="#d8d8d8"/><text x="607.2" y="375.0" font-size="4.52" fill="#b4b4b4">Santiago de</text><text x="607.2" y="379.1" font-size="4.53" fill="#b4b4b4">Compostela</text><rect x="606.4" y="379.8" width="1.6" height="1.6" fill="#d8d8d8"/><text x="631.5" y="375.0" font-size="4.52" fill="#b4b4b4">Oviedo</text><rect x="630.7" y="375.7" width="1.6" height="1.6" fill="#d8d8d8"/><text x="647.4" y="373.3" font-size="4.51" fill="#b4b4b4">Santander</text><rect x="646.6" y="374.0" width="1.6" height="1.6" fill="#d8d8d8"/><text x="651.0" y="384.7" font-size="4.54" fill="#b4b4b4">Burgos</text><rect x="650.2" y="385.4" width="1.6" height="1.6" fill="#d8d8d8"/><text x="677.8" y="390.3" font-size="4.55" fill="#b4b4b4">Zaragoza</text><rect x="677.0" y="391.0" width="1.6" height="1.6" fill="#d8d8d8"/><text x="606.0" y="394.0" font-size="4.56" fill="#b4b4b4">Porto</text><rect x="605.2" y="394.7" width="1.6" height="1.6" fill="#d8d8d8"/><text x="648.6" y="395.0" font-size="5.24" fill="#535353" letter-spacing="0.45">Spain</text><text x="660.8" y="406.0" font-size="4.58" fill="#b4b4b4">Madrid</text><rect x="660.0" y="406.6" width="1.6" height="1.6" fill="#d8d8d8"/><text x="685.1" y="408.5" font-size="4.59" fill="#b4b4b4">Valencia</text><rect x="684.3" y="409.1" width="1.6" height="1.6" fill="#d8d8d8"/><text x="722.1" y="393.4" font-size="4.56" fill="#b4b4b4">Barcelona</text><rect x="721.3" y="394.1" width="1.6" height="1.6" fill="#d8d8d8"/><text x="710.7" y="404.7" font-size="4.58" fill="#b4b4b4">Palma de</text><text x="710.7" y="408.5" font-size="4.59" fill="#b4b4b4">Mallorca</text><rect x="709.9" y="409.1" width="1.6" height="1.6" fill="#d8d8d8"/><text x="606.0" y="410.3" font-size="5.28" fill="#535353" letter-spacing="0.45">Portugal</text><text x="591.4" y="420.9" font-size="4.62" fill="#b4b4b4">Lisbon</text><rect x="590.6" y="421.5" width="1.6" height="1.6" fill="#d8d8d8"/><text x="675.4" y="422.1" font-size="4.62" fill="#b4b4b4">Murcia</text><rect x="674.6" y="422.7" width="1.6" height="1.6" fill="#d8d8d8"/><text x="631.5" y="441.4" font-size="4.66" fill="#b4b4b4">Tangier</text><rect x="630.7" y="442.0" width="1.6" height="1.6" fill="#d8d8d8"/><text x="715.4" y="432.6" font-size="4.64" fill="#b4b4b4">Algiers</text><rect x="714.6" y="433.2" width="1.6" height="1.6" fill="#d8d8d8"/><text x="749.1" y="436.5" font-size="4.65" fill="#b4b4b4">Constantine</text><rect x="748.3" y="437.1" width="1.6" height="1.6" fill="#d8d8d8"/><text x="789.8" y="433.1" font-size="4.64" fill="#b4b4b4">Tunis</text><rect x="789.0" y="433.7" width="1.6" height="1.6" fill="#d8d8d8"/><text x="787.6" y="441.7" font-size="4.66" fill="#b4b4b4">Sousse</text><rect x="786.8" y="442.3" width="1.6" height="1.6" fill="#d8d8d8"/><text x="763.6" y="445.2" font-size="4.67" fill="#b4b4b4">Tebessa</text><rect x="762.8" y="445.8" width="1.6" height="1.6" fill="#d8d8d8"/><text x="680.5" y="446.5" font-size="4.67" fill="#b4b4b4">Sidi Bel Abbès</text><rect x="679.7" y="447.1" width="1.6" height="1.6" fill="#d8d8d8"/><text x="718.0" y="451.2" font-size="4.68" fill="#b4b4b4">Djelfa</text><rect x="717.2" y="451.8" width="1.6" height="1.6" fill="#d8d8d8"/><text x="741.3" y="449.8" font-size="4.68" fill="#b4b4b4">Biskra</text><rect x="740.5" y="450.4" width="1.6" height="1.6" fill="#d8d8d8"/><text x="779.2" y="458.0" font-size="5.40" fill="#535353" letter-spacing="0.45">Tunisia</text><text x="620.6" y="456.2" font-size="4.69" fill="#b4b4b4">Rabat</text><rect x="619.8" y="456.8" width="1.6" height="1.6" fill="#d8d8d8"/><text x="637.6" y="456.7" font-size="4.69" fill="#b4b4b4">Fez</text><rect x="636.8" y="457.3" width="1.6" height="1.6" fill="#d8d8d8"/><text x="598.7" y="461.1" font-size="4.70" fill="#b4b4b4">Casablanca</text><rect x="597.9" y="461.7" width="1.6" height="1.6" fill="#d8d8d8"/><text x="521.9" y="468.4" font-size="4.72" fill="#b4b4b4">Funchal</text><rect x="521.1" y="469.0" width="1.6" height="1.6" fill="#d8d8d8"/><text x="627.9" y="473.4" font-size="5.44" fill="#535353" letter-spacing="0.45">Morocco</text><text x="665.7" y="477.9" font-size="4.74" fill="#b4b4b4">Bechar</text><rect x="664.9" y="478.5" width="1.6" height="1.6" fill="#d8d8d8"/><text x="592.6" y="487.9" font-size="4.76" fill="#b4b4b4">Agadir</text><rect x="591.8" y="488.5" width="1.6" height="1.6" fill="#d8d8d8"/><text x="814.0" y="466.3" font-size="4.72" fill="#b4b4b4">Tripoli</text><rect x="813.2" y="466.9" width="1.6" height="1.6" fill="#d8d8d8"/><text x="739.0" y="475.5" font-size="4.74" fill="#b4b4b4">Ouargla</text><rect x="738.2" y="476.1" width="1.6" height="1.6" fill="#d8d8d8"/><text x="794.5" y="476.1" font-size="4.74" fill="#b4b4b4">Nalut</text><rect x="793.7" y="476.7" width="1.6" height="1.6" fill="#d8d8d8"/><text x="823.3" y="477.2" font-size="4.74" fill="#b4b4b4">Bani Walid</text><rect x="822.5" y="477.8" width="1.6" height="1.6" fill="#d8d8d8"/><text x="848.9" y="481.9" font-size="4.75" fill="#b4b4b4">Sirte</text><rect x="848.1" y="482.5" width="1.6" height="1.6" fill="#d8d8d8"/><text x="881.8" y="473.7" font-size="4.73" fill="#b4b4b4">Benghazi</text><rect x="881.0" y="474.3" width="1.6" height="1.6" fill="#d8d8d8"/><text x="884.9" y="485.8" font-size="4.76" fill="#b4b4b4">Ajdabiya</text><rect x="884.1" y="486.4" width="1.6" height="1.6" fill="#d8d8d8"/><text x="781.1" y="491.1" font-size="4.77" fill="#b4b4b4">Ghadames</text><rect x="780.3" y="491.7" width="1.6" height="1.6" fill="#d8d8d8"/><text x="534.1" y="503.5" font-size="4.80" fill="#b4b4b4">Las Palmas de</text><text x="534.1" y="507.9" font-size="4.81" fill="#b4b4b4">Gran Canaria</text><rect x="533.3" y="508.5" width="1.6" height="1.6" fill="#d8d8d8"/><text x="606.0" y="512.2" font-size="4.81" fill="#b4b4b4">Tindouf</text><rect x="605.2" y="512.8" width="1.6" height="1.6" fill="#d8d8d8"/><text x="683.9" y="510.8" font-size="4.81" fill="#b4b4b4">Adrar</text><rect x="683.1" y="511.4" width="1.6" height="1.6" fill="#d8d8d8"/><text x="713.0" y="510.1" font-size="5.53" fill="#535353" letter-spacing="0.45">Algeria</text><text x="556.0" y="516.4" font-size="4.82" fill="#b4b4b4">Laayoune</text><rect x="555.2" y="517.0" width="1.6" height="1.6" fill="#d8d8d8"/><text x="831.5" y="517.8" font-size="4.83" fill="#b4b4b4">Sabha</text><rect x="830.7" y="518.4" width="1.6" height="1.6" fill="#d8d8d8"/><text x="868.4" y="520.4" font-size="5.56" fill="#535353" letter-spacing="0.45">Libya</text><text x="772.9" y="522.8" font-size="4.84" fill="#b4b4b4">Illizi</text><rect x="772.1" y="523.4" width="1.6" height="1.6" fill="#d8d8d8"/><text x="827.4" y="528.1" font-size="4.85" fill="#b4b4b4">Murzuq</text><rect x="826.6" y="528.7" width="1.6" height="1.6" fill="#d8d8d8"/><text x="548.3" y="538.6" font-size="5.60" fill="#535353" letter-spacing="0.45">Western</text><text x="548.3" y="544.2" font-size="5.62" fill="#535353" letter-spacing="0.45">Sahara</text><text x="527.1" y="546.2" font-size="4.89" fill="#b4b4b4">Dakhla</text><rect x="526.3" y="546.7" width="1.6" height="1.6" fill="#d8d8d8"/><text x="979.1" y="481.7" font-size="4.75" fill="#b4b4b4">Alexandria</text><rect x="978.3" y="482.3" width="1.6" height="1.6" fill="#d8d8d8"/><text x="1001.7" y="492.6" font-size="4.77" fill="#b4b4b4">Cairo</text><rect x="1000.9" y="493.2" width="1.6" height="1.6" fill="#d8d8d8"/><text x="1051.0" y="506.3" font-size="4.80" fill="#b4b4b4">Tabuk</text><rect x="1050.2" y="506.9" width="1.6" height="1.6" fill="#d8d8d8"/><text x="993.5" y="509.0" font-size="4.81" fill="#b4b4b4">Al Minya</text><rect x="992.7" y="509.6" width="1.6" height="1.6" fill="#d8d8d8"/><text x="1043.8" y="515.8" font-size="4.82" fill="#b4b4b4">Duba</text><rect x="1043.0" y="516.4" width="1.6" height="1.6" fill="#d8d8d8"/><text x="1103.8" y="514.7" font-size="4.82" fill="#b4b4b4">Ha'il</text><rect x="1103.0" y="515.3" width="1.6" height="1.6" fill="#d8d8d8"/><text x="988.3" y="524.9" font-size="5.57" fill="#535353" letter-spacing="0.45">Egypt</text><text x="1054.5" y="525.6" font-size="4.84" fill="#b4b4b4">Al Wajh</text><rect x="1053.7" y="526.2" width="1.6" height="1.6" fill="#d8d8d8"/><text x="1017.1" y="529.5" font-size="4.85" fill="#b4b4b4">Luxor</text><rect x="1016.3" y="530.1" width="1.6" height="1.6" fill="#d8d8d8"/><text x="1090.0" y="540.8" font-size="4.88" fill="#b4b4b4">Medina</text><rect x="1089.2" y="541.3" width="1.6" height="1.6" fill="#d8d8d8"/><text x="1129.0" y="524.9" font-size="4.84" fill="#b4b4b4">Buraydah</text><rect x="1128.2" y="525.5" width="1.6" height="1.6" fill="#d8d8d8"/><text x="1190.8" y="524.0" font-size="4.84" fill="#b4b4b4">Dammam</text><rect x="1190.0" y="524.6" width="1.6" height="1.6" fill="#d8d8d8"/><text x="1205.1" y="536.5" font-size="5.60" fill="#535353" letter-spacing="0.45">Qatar</text><text x="1238.4" y="535.5" font-size="4.86" fill="#b4b4b4">Dubai</text><rect x="1237.6" y="536.0" width="1.6" height="1.6" fill="#d8d8d8"/><text x="1242.2" y="517.7" font-size="4.83" fill="#b4b4b4">Bandar Abbas</text><rect x="1241.4" y="518.3" width="1.6" height="1.6" fill="#d8d8d8"/><text x="1161.3" y="539.9" font-size="4.87" fill="#b4b4b4">Riyadh</text><rect x="1160.5" y="540.4" width="1.6" height="1.6" fill="#d8d8d8"/><text x="1240.3" y="547.3" font-size="5.62" fill="#535353" letter-spacing="0.45">United Arab</text><text x="490.6" y="140.6" font-size="4" fill="#7a7a7a" font-style="italic" letter-spacing="0.35" transform="rotate(-21 490.6 139.2)">Denmark Strait</text><text x="113" y="505.6" font-size="7.5" fill="#8c8c8c" font-style="italic" letter-spacing="2.2">so</text></g>
<g fill="#ffab00" stroke="#1b2130" stroke-width="1.1"><circle cx="550.9" cy="157.1" r="4.3"/><circle cx="516.6" cy="171.6" r="4.3"/><circle cx="531.1" cy="178.0" r="4.3"/><circle cx="531.9" cy="180.3" r="4.3"/><circle cx="550.9" cy="169.7" r="4.3"/><circle cx="549.4" cy="174.2" r="4.3"/><circle cx="649.7" cy="255.3" r="4.3"/><circle cx="617.5" cy="273.3" r="4.3"/><circle cx="625.1" cy="265.4" r="4.3"/><circle cx="631.8" cy="263.3" r="4.3"/><circle cx="630.6" cy="268.7" r="4.3"/><circle cx="636.0" cy="268.1" r="4.3"/><circle cx="633.0" cy="274.2" r="4.3"/><circle cx="638.2" cy="273.0" r="4.3"/><circle cx="659.3" cy="373.2" r="4.3"/><circle cx="665.1" cy="374.9" r="4.3"/><circle cx="671.9" cy="384.7" r="4.3"/><circle cx="669.7" cy="396.5" r="4.3"/><circle cx="689.2" cy="400.8" r="4.3"/><circle cx="711.7" cy="386.2" r="4.3"/><circle cx="709.3" cy="389.8" r="4.3"/><circle cx="626.4" cy="408.5" r="4.3"/><circle cx="641.1" cy="422.1" r="4.3"/><circle cx="628.9" cy="426.4" r="4.3"/><circle cx="638.0" cy="428.2" r="4.3"/><circle cx="662.4" cy="428.8" r="4.3"/><circle cx="662.4" cy="431.9" r="4.3"/><circle cx="591.2" cy="477.8" r="4.3"/><circle cx="616.7" cy="482.1" r="4.3"/><circle cx="619.1" cy="483.7" r="4.3"/><circle cx="829.5" cy="370.9" r="4.3"/><circle cx="835.3" cy="373.1" r="4.3"/><circle cx="840.4" cy="374.5" r="4.3"/><circle cx="851.2" cy="380.7" r="4.3"/><circle cx="821.6" cy="438.1" r="4.3"/><circle cx="823.7" cy="439.6" r="4.3"/></g>
</svg>

<div id="side">
<svg width="40" height="460" viewBox="0 0 40 460" style="position:absolute;left:0;top:0" fill="#b8b8b8">
 <rect x="7.7" y="27.5" width="18.9" height="3.2" rx="1.6"/><rect x="7.7" y="33.7" width="18.9" height="3.2" rx="1.6"/><rect x="7.7" y="39.9" width="18.9" height="3.2" rx="1.6"/>
 <path d="M9.9 80.5a1.5 1.5 0 0 1 1.5-1.5h8.6v5.2a1.5 1.5 0 0 0 1.5 1.5h7.4v13.5a1.5 1.5 0 0 1-1.5 1.5H11.4a1.5 1.5 0 0 1-1.5-1.5z"/>
 <path d="M21.9 79.6L27.8 85.1H21.9z"/>
 <g stroke="#b8b8b8" stroke-width="1.7" fill="none" stroke-linecap="round" stroke-linejoin="round"><path d="M14.6 134.6L8.9 140.5L14.6 146.4M24.6 134.6L30.3 140.5L24.6 146.4M21.3 133.6L17.9 147.4"/></g>
 <path d="M8.5 183.3h15.8v-3l6.7 4.6-6.7 4.6v-3H8.5z M30.8 192.4H15v-3l-6.7 4.6 6.7 4.6v-3h15.8z"/>
 <path fill-rule="evenodd" d="M10.4 227.7h17.9a1.5 1.5 0 0 1 1.5 1.5v14.7a1.5 1.5 0 0 1-1.5 1.5H10.4a1.5 1.5 0 0 1-1.5-1.5V229.2a1.5 1.5 0 0 1 1.5-1.5z M10.8 231.2v3.2h4.3v-3.2z M17 231.2v3.2h4.3v-3.2z M23.2 231.2v3.2h4.4v-3.2z M10.8 235.9v3.1h4.3v-3.1z M17 235.9v3.1h4.3v-3.1z M23.2 235.9v3.1h4.4v-3.1z M10.8 240.6v3.1h4.3v-3.1z M17 240.6v3.1h4.3v-3.1z M23.2 240.6v3.1h4.4v-3.1z"/>
 <rect x="16.2" y="277.5" width="5.9" height="5.5" rx="1"/><rect x="8.6" y="290.1" width="5.7" height="5.9" rx="1"/><rect x="16.4" y="290.1" width="5.7" height="5.9" rx="1"/><rect x="24.4" y="290.1" width="5.7" height="5.9" rx="1"/>
 <path d="M19.2 282.5v8M11.4 290.5v-3.4h15.8v3.4" stroke="#b8b8b8" stroke-width="1.4" fill="none"/>
 <path d="M10.7 328h17.7l-6.9 8.3v10.1l-3.9-3.3v-6.8z"/>
 <g stroke="#b8b8b8" stroke-width="1.3" fill="none"><path d="M19.1 376.6L10.9 390.6H28z M15 383.6H23.2L19.1 390.6z"/></g>
 <circle cx="19.1" cy="376.6" r="1.9"/><circle cx="10.9" cy="390.4" r="1.9"/><circle cx="28" cy="390.4" r="1.9"/><circle cx="15" cy="383.6" r="1.7"/><circle cx="23.2" cy="383.6" r="1.7"/><circle cx="19.1" cy="390.8" r="1.7"/>
 <circle cx="19.5" cy="436.9" r="9.5"/>
 <path d="M13.1 432.9L15.3 430.1L19.6 429.7L23.6 432.1L22.8 435.6L20.4 437.1L19.4 438.6L21.1 440.6L18.4 440.9L16 438.6L14 435.6z M20.6 443.6L22.9 441.6L24.3 441.7L22.3 444.4z" fill="#121212" stroke="#121212" stroke-width="0.6" stroke-linejoin="round"/>
 <circle cx="19.8" cy="431.7" r="0.9" fill="#b8b8b8"/>
</svg>
</div>

<!-- search -->
<div style="position:absolute;left:51px;top:18.1px;width:393.8px;height:35.9px;border:1.9px solid #4e4e4e;border-radius:18px"></div>
<div class="a" style="left:70px;top:28.7px;color:#9c9c9c;transform:scaleX(0.905);transform-origin:0 0">Search From Graph</div>
<svg style="position:absolute;left:418.2px;top:29px" width="15" height="15" viewBox="0 0 15 15"><circle cx="7.5" cy="7.5" r="6.7" fill="#a4a4a4"/><path d="M5.1 5.1L9.9 9.9M9.9 5.1L5.1 9.9" stroke="#000" stroke-width="1.9" stroke-linecap="round"/></svg>

<!-- title -->
<div class="a" style="left:557px;top:29.3px;color:#c9c9c9;transform:scaleX(0.934);transform-origin:0 0">Demo2 / GOT_FilmingLocs*</div>
<svg style="position:absolute;left:755px;top:32px" width="13" height="9" viewBox="0 0 13 9"><path d="M2 2.5L6.5 7L11 2.5" stroke="#c9c9c9" stroke-width="1.4" fill="none"/></svg>

<!-- segmented -->
<div style="position:absolute;left:848px;top:18.5px;width:459px;height:35px;border-radius:18px;overflow:hidden;background:#2b2b2b">
  <div style="position:absolute;left:0;top:0;width:119px;height:35px;background:#8ecff6"></div>
  <div style="position:absolute;left:236px;top:0;width:1px;height:35px;background:#333"></div>
  <div style="position:absolute;left:319px;top:0;width:140px;height:35px;background:#8ecff6"></div>
</div>
<div class="a" style="left:877px;top:29.3px;color:#161616;transform:scaleX(0.929);transform-origin:0 0">Category</div>
<div class="a" style="left:997px;top:29.3px;color:#bdbdbd;transform:scaleX(0.954);transform-origin:0 0">Property</div>
<div class="a" style="left:1114px;top:29.3px;color:#bdbdbd;transform:scaleX(0.88);transform-origin:0 0">Tag</div>
<div class="a" style="left:1196px;top:29.3px;color:#161616;transform:scaleX(0.923);transform-origin:0 0">Relationship</div>

<!-- legend -->
<div style="position:absolute;left:1089px;top:102px;width:187px;height:28px;border:2px solid #f2a600;border-radius:14px"></div>
<div class="a" style="left:1107px;top:109.4px;color:#f7a800;transform:scaleX(0.965);transform-origin:0 0">kmzImport_Point 0/67</div>
<div style="position:absolute;left:1287px;top:106px;width:20px;height:20px;border-radius:50%;background:#ffa900"></div>

<div id="panel">
  <div style="position:absolute;left:0;top:0;width:107px;height:43px;background:#3c3c3c;border-right:1.6px solid #737373;border-top-right-radius:5px"></div>
  <div style="position:absolute;left:105.6px;top:41.2px;width:244.4px;height:1.8px;background:#6c6c6c;border-bottom-left-radius:2px"></div>
  <div class="a" style="left:18px;top:14.4px;color:#ececec;transform:scaleX(0.94);transform-origin:0 0">Properties</div>
  <div class="a" style="left:125px;top:14.4px;color:#c4c4c4;transform:scaleX(0.942);transform-origin:0 0">Neighbors</div>
  <svg style="position:absolute;left:275.1px;top:6.3px" width="26" height="26" viewBox="0 0 26 26"><path fill="#e4e4e4" stroke="#111" stroke-width="1.1" stroke-linejoin="round" paint-order="stroke" d="M13 2L17.1 6.7H14.6V11.4H19.3V8.9L24 13L19.3 17.1V14.6H14.6V19.3H17.1L13 24L8.9 19.3H11.4V14.6H6.7V17.1L2 13L6.7 8.9V11.4H11.4V6.7H8.9Z"/></svg>
  <svg style="position:absolute;left:317px;top:9px" width="21" height="21" viewBox="0 0 21 21"><circle cx="10.5" cy="10.5" r="9.8" fill="#e2e2e2" stroke="#111" stroke-width="0.8"/><path d="M7.2 7.2L13.8 13.8M13.8 7.2L7.2 13.8" stroke="#111" stroke-width="2.5" stroke-linecap="round"/></svg>
  <div style="position:absolute;left:17px;top:59px;width:145px;height:36px;border:2px solid #f2a600;border-radius:18px;background:#3a3a3a"></div>
  <div class="a" style="left:32px;top:70px;color:#f7a800;transform:scaleX(0.949);transform-origin:0 0">kmzImport_Point</div>
  <div class="a" style="left:18px;top:128.7px;color:#ececec;transform:scaleX(0.943);transform-origin:0 0">Property Name</div>
  <div class="a" style="left:171px;top:128.7px;color:#ececec;transform:scaleX(0.937);transform-origin:0 0">Property Value</div>
  <div style="position:absolute;left:0;top:158px;width:352px;height:1.5px;background:#232323"></div>
  <div class="a" style="left:18px;top:174.4px;color:#c4c4c4">id</div>
  <div class="a" style="left:171px;top:174.4px;color:#c4c4c4;transform:scaleX(0.951);transform-origin:0 0">M0A37EW9BGICR</div>
  <div style="position:absolute;left:0;top:204px;width:352px;height:1.5px;background:#232323"></div>
  <div class="a" style="left:18px;top:220.4px;color:#c4c4c4">lat</div>
  <div class="a" style="left:171px;top:220.4px;color:#c4c4c4;transform:scaleX(0.981);transform-origin:0 0">64.0185923</div>
  <div style="position:absolute;left:0;top:250px;width:352px;height:1.5px;background:#232323"></div>
  <div class="a" style="left:18px;top:266.4px;color:#c4c4c4">lng</div>
  <div class="a" style="left:171px;top:266.4px;color:#c4c4c4;transform:scaleX(0.983);transform-origin:0 0">-16.8214782</div>
  <div style="position:absolute;left:0;top:296px;width:352px;height:1.5px;background:#232323"></div>
  <div class="a" style="left:18px;top:312.4px;color:#c4c4c4">name</div>
  <div class="a" style="left:171px;top:312.4px;color:#c4c4c4;transform:scaleX(0.929);transform-origin:0 0">Svínafellsjökull</div>
  <div style="position:absolute;left:0;top:341px;width:352px;height:1.5px;background:#232323"></div>
  <div style="position:absolute;left:17px;top:475px;width:142px;height:36px;border-radius:18px;background:#464646"></div>
  <svg style="position:absolute;left:32px;top:487px" width="14" height="14" viewBox="0 0 14 14"><circle cx="7" cy="7" r="6.8" fill="#cfcfcf"/><path d="M7 3.6v6.8M3.6 7h6.8" stroke="#464646" stroke-width="2.2"/></svg>
  <div class="a" style="left:53px;top:487px;color:#d0d0d0;transform:scaleX(0.954);transform-origin:0 0">Add Property</div>
  <svg style="position:absolute;left:336px;top:509px" width="8" height="8" viewBox="0 0 8 8"><path d="M8 0L8 8L0 8z" fill="#4a4a4a"/></svg>
</div>

</body></html>
